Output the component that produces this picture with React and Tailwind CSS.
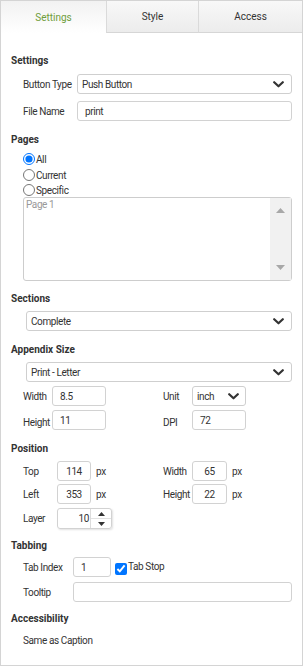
import React, { useState } from 'react';

const Chevron = () => (
  <svg width="11" height="7" viewBox="0 0 11 7" className="shrink-0">
    <polyline points="1.2,1.2 5.5,5.3 9.8,1.2" fill="none" stroke="#333" strokeWidth="2.2" strokeLinecap="round" strokeLinejoin="round" />
  </svg>
);

const Select = ({ value, className }) => (
  <div className={`flex items-center justify-between h-[20px] border border-[#cfcfcf] rounded-[3px] bg-white pl-[4px] pr-[7px] ${className}`}>
    <span>{value}</span>
    <Chevron />
  </div>
);

const Field = ({ value, className = '', align = 'left' }) => (
  <div className={`flex items-center h-[20px] border border-[#d2d2d2] rounded-[3px] bg-white px-[7px] ${align === 'center' ? 'justify-center' : ''} ${className}`}>
    {value}
  </div>
);

const Heading = ({ children, className = '' }) => (
  <div className={`h-[16px] leading-[16px] font-bold text-[#333] tracking-normal ${className}`}>{children}</div>
);

const Label = ({ children, className = '' }) => (
  <span className={`shrink-0 whitespace-nowrap ${className}`}>{children}</span>
);

const App = () => {
  const [tab, setTab] = useState('Settings');
  const [pages, setPages] = useState('All');
  const [tabStop, setTabStop] = useState(true);
  const tabs = ['Settings', 'Style', 'Access'];
  const widths = { Settings: 'w-[105px]', Style: 'w-[92px]', Access: 'flex-1' };

  return (
    <div
      className="w-[303px] h-[666px] border border-[#d4d4d4] bg-white text-[10px] tracking-[-0.4px] text-[#333] flex flex-col"
      style={{ fontFamily: 'Roboto, "Liberation Sans", sans-serif' }}
    >
      <div className="flex h-[32px] shrink-0">
        {tabs.map((t, i) => (
          <button
            key={t}
            onClick={() => setTab(t)}
            className={`${widths[t]} h-full text-[10px] tracking-normal ${i > 0 ? 'border-l border-[#dadada]' : ''} ${
              tab === t
                ? 'bg-gradient-to-b from-[#f2f2f2] to-white text-[#6f9d3a]'
                : 'bg-gradient-to-b from-[#f8f8f8] to-[#ececec] text-[#333] border-b border-b-[#d6d6d6]'
            }`}
          >
            {t}
          </button>
        ))}
      </div>

      <div className="flex flex-col pl-[10px] pr-[10px] pt-[20px]">
        <Heading>Settings</Heading>
        <div className="flex items-center mt-[5px] pl-[12px]">
          <Label className="w-[54px]">Button Type</Label>
          <Select value="Push Button" className="flex-1" />
        </div>
        <div className="flex items-center mt-[7px] pl-[12px]">
          <Label className="w-[54px]">File Name</Label>
          <Field value="print" className="flex-1" />
        </div>

        <Heading className="mt-[11px]">Pages</Heading>
        <div className="flex flex-col pl-[12px] mt-[3px]">
          {['All', 'Current', 'Specific'].map((p, i) => (
            <label key={p} className={`flex items-center ${i === 2 ? 'h-[14px]' : 'h-[16px]'}`}>
              <input
                type="radio"
                name="pages"
                checked={pages === p}
                onChange={() => setPages(p)}
                className="m-0 w-[12px] h-[12px] mr-[1px]"
              />
              <span>{p}</span>
            </label>
          ))}
          <div className="flex h-[84px] border border-[#cdcdcd] rounded-[3px] bg-white">
            <div className="flex-1 text-[#999] pl-[2px] leading-[14px]">Page 1</div>
            <div className="w-[21px] bg-[#f1f1f1] flex flex-col items-center justify-between py-[10px]">
              <svg width="9" height="5" viewBox="0 0 9 5"><polygon points="0,5 4.5,0 9,5" fill="#a8a8a8" /></svg>
              <svg width="9" height="5" viewBox="0 0 9 5"><polygon points="0,0 4.5,5 9,0" fill="#a8a8a8" /></svg>
            </div>
          </div>
        </div>

        <Heading className="mt-[10px]">Sections</Heading>
        <Select value="Complete" className="mt-[4px] ml-[15px]" />

        <Heading className="mt-[11px]">Appendix Size</Heading>
        <Select value="Print - Letter" className="mt-[4px] ml-[15px]" />
        <div className="flex items-center mt-[4px] pl-[12px]">
          <Label className="w-[29px]">Width</Label>
          <Field value="8.5" className="w-[54px]" />
          <Label className="w-[29px] ml-[57px]">Unit</Label>
          <div className="flex items-center justify-between w-[54px] h-[20px] border border-[#cfcfcf] rounded-[3px] pl-[4px] pr-[6px]">
            <span>inch</span>
            <Chevron />
          </div>
        </div>
        <div className="flex items-center mt-[4px] pl-[12px]">
          <Label className="w-[29px] pt-[4px]">Height</Label>
          <Field value="11" className="w-[54px]" />
          <Label className="w-[29px] ml-[57px] pt-[4px]">DPI</Label>
          <Field value="72" className="w-[54px]" />
        </div>

        <Heading className="mt-[11px]">Position</Heading>
        <div className="flex items-center mt-[4px] pl-[12px]">
          <Label className="w-[34px]">Top</Label>
          <Field value="114" className="w-[34px]" align="center" />
          <Label className="w-[72px] pl-[5px]">px</Label>
          <Label className="w-[29px]">Width</Label>
          <Field value="65" className="w-[35px]" align="center" />
          <Label className="pl-[5px]">px</Label>
        </div>
        <div className="flex items-center mt-[3px] pl-[12px]">
          <Label className="w-[34px]">Left</Label>
          <Field value="353" className="w-[34px]" align="center" />
          <Label className="w-[72px] pl-[5px]">px</Label>
          <Label className="w-[29px]">Height</Label>
          <Field value="22" className="w-[35px]" align="center" />
          <Label className="pl-[5px]">px</Label>
        </div>
        <div className="flex items-center mt-[4px] pl-[12px]">
          <Label className="w-[34px]">Layer</Label>
          <div className="flex h-[21px] w-[55px] border border-[#d2d2d2] rounded-[3px] shadow-[1px_1px_2px_rgba(0,0,0,0.12)]">
            <div className="flex-1 flex items-center justify-end pr-[1px]">10</div>
            <div className="w-[21px] flex flex-col border-l border-[#dcdcdc]">
              <div className="flex-1 flex items-center justify-center border-b border-[#e2e2e2]">
                <svg width="7" height="4" viewBox="0 0 7 4"><polygon points="0,4 3.5,0 7,4" fill="#333" /></svg>
              </div>
              <div className="flex-1 flex items-center justify-center">
                <svg width="7" height="4" viewBox="0 0 7 4"><polygon points="0,0 3.5,4 7,0" fill="#333" /></svg>
              </div>
            </div>
          </div>
        </div>

        <Heading className="mt-[9px]">Tabbing</Heading>
        <div className="flex items-center mt-[3px] pl-[12px]">
          <Label className="w-[50px]">Tab Index</Label>
          <Field value="1" className="w-[38px]" />
          <label className="flex items-center ml-[4px] h-[16px] pt-[4px]">
            <input
              type="checkbox"
              checked={tabStop}
              onChange={(e) => setTabStop(e.target.checked)}
              className="m-0 w-[12px] h-[12px] mr-[1px]"
            />
            <span className="-mt-[5px]">Tab Stop</span>
          </label>
        </div>
        <div className="flex items-center mt-[5px] pl-[12px]">
          <Label className="w-[50px]">Tooltip</Label>
          <Field value="" className="flex-1" />
        </div>

        <Heading className="mt-[9px]">Accessibility</Heading>
        <div className="mt-[6px] pl-[12px] h-[16px] leading-[16px]">Same as Caption</div>
      </div>
    </div>
  );
};

export default App;
